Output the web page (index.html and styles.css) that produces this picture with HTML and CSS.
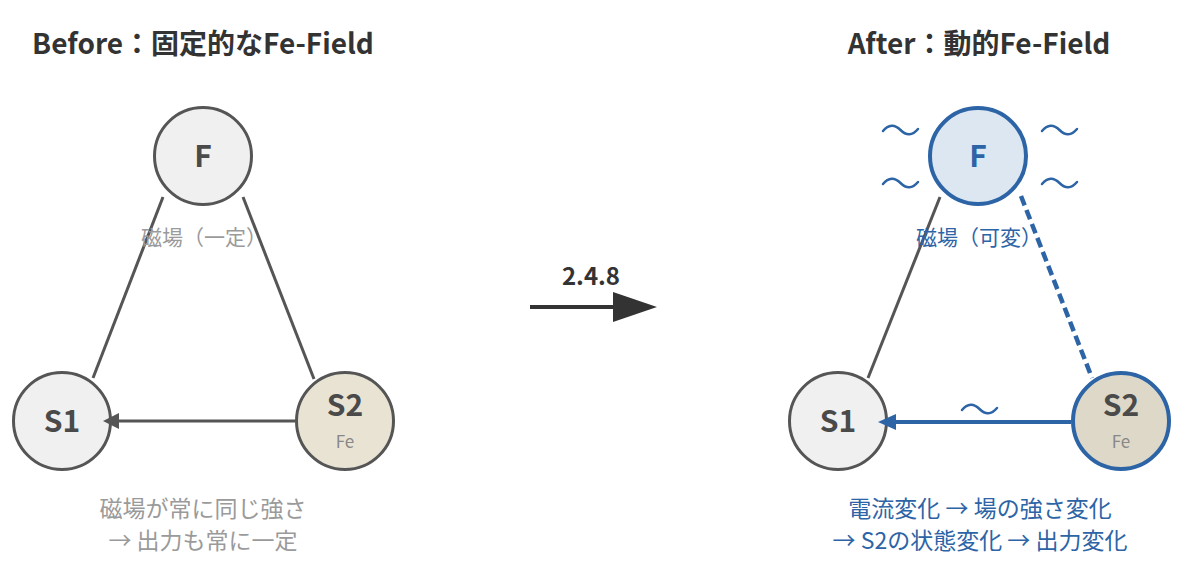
FILE: index.html
```html
<!DOCTYPE html>
<html lang="ja">
<head>
<meta charset="utf-8">
<title>Fe-Field Before / After</title>
<link rel="stylesheet" href="styles.css">
</head>
<body>
<main class="stage">
  <section class="panel">
    <h2 class="title">Before：固定的なFe-Field</h2>
    <svg class="diagram" viewBox="0 62 406 517" width="406" height="517">
      <line class="edge" x1="163" y1="197" x2="93" y2="378"/>
      <line class="edge" x1="243" y1="197" x2="314" y2="379"/>
      <line class="edge" x1="295" y1="421" x2="116" y2="421"/>
      <circle class="node" cx="203" cy="156" r="48.5"/>
      <circle class="node" cx="62" cy="421" r="48.5"/>
      <circle class="node node-fe" cx="345" cy="421" r="48.5"/>
      <polygon class="head" points="103,421 119,413 119,429"/>
      <text class="name" x="203" y="167">F</text>
      <text class="name" x="62" y="432">S1</text>
      <text class="name" x="345" y="416">S2</text>
      <text class="sub" x="345" y="448">Fe</text>
      <text class="label" x="204" y="245">磁場（一定）</text>
      <text class="caption" x="203" y="517">磁場が常に同じ強さ</text>
      <text class="caption" x="203" y="549">→ 出力も常に一定</text>
    </svg>
  </section>
  <section class="panel">
    <svg class="diagram" viewBox="406 0 368 579" width="368" height="579">
      <text class="step" x="591" y="285">2.4.8</text>
      <line class="bigline" x1="530" y1="307" x2="616" y2="307"/>
      <polygon class="bighead" points="613,292 657,307 613,322"/>
    </svg>
  </section>
  <section class="panel">
    <h2 class="title">After：動的Fe-Field</h2>
    <svg class="diagram" viewBox="774 62 410 517" width="410" height="517">
      <line class="edge" x1="940" y1="197" x2="868" y2="378"/>
      <line class="edge-dash" x1="1021" y1="196" x2="1092" y2="378"/>
      <line class="edge-blue" x1="1071" y1="422" x2="892" y2="422"/>
      <circle class="node node-active" cx="978" cy="156" r="48"/>
      <circle class="node" cx="838" cy="421" r="48.5"/>
      <circle class="node node-fe-active" cx="1121" cy="421" r="48"/>
      <polygon class="head-blue" points="878,422 896,414 896,430"/>
      <path class="wave" d="M883 131 Q891.5 121 900.5 130 T918 129"/>
      <path class="wave" d="M883 184 Q891.5 174 900.5 183 T918 182"/>
      <path class="wave" d="M1042 131 Q1050.5 121 1059.5 130 T1077 129"/>
      <path class="wave" d="M1042 184 Q1050.5 174 1059.5 183 T1077 182"/>
      <path class="wave" d="M962 410 Q970.5 400 979.5 409 T997 408"/>
      <text class="name name-blue" x="978" y="167">F</text>
      <text class="name" x="838" y="432">S1</text>
      <text class="name" x="1121" y="416">S2</text>
      <text class="sub" x="1121" y="448">Fe</text>
      <text class="label label-blue" x="979" y="245">磁場（可変）</text>
      <text class="caption caption-blue" x="980" y="517">電流変化 → 場の強さ変化</text>
      <text class="caption caption-blue" x="980" y="549">→ S2の状態変化 → 出力変化</text>
    </svg>
  </section>
</main>
</body>
</html>
```

FILE: styles.css
```css
html, body {
  margin: 0;
  padding: 0;
  background: #ffffff;
}

body {
  font-family: "Noto Sans CJK JP", "Noto Sans", sans-serif;
}

.stage {
  display: grid;
  grid-template-columns: 406px 368px 410px;
  width: 1200px;
  height: 579px;
  overflow: hidden;
}

.panel {
  display: flex;
  flex-direction: column;
}

.title {
  margin: 0;
  padding-top: 22px;
  height: 40px;
  line-height: 40px;
  font-size: 28px;
  font-weight: 700;
  color: #333333;
  text-align: center;
  white-space: nowrap;
}

.diagram {
  display: block;
  overflow: visible;
}

.edge {
  stroke: #555555;
  stroke-width: 3;
}

.edge-dash {
  stroke: #2c64a6;
  stroke-width: 4.5;
  stroke-dasharray: 10 5;
}

.edge-blue {
  stroke: #2c64a6;
  stroke-width: 4;
}

.head {
  fill: #555555;
}

.head-blue {
  fill: #2c64a6;
}

.node {
  fill: #f0f0f0;
  stroke: #555555;
  stroke-width: 3;
}

.node-fe {
  fill: #e9e3d4;
}

.node-active {
  fill: #dce7f2;
  stroke: #2c64a6;
  stroke-width: 4;
}

.node-fe-active {
  fill: #ddd8c8;
  stroke: #2c64a6;
  stroke-width: 4;
}

.wave {
  fill: none;
  stroke: #2c64a6;
  stroke-width: 2.5;
  stroke-linecap: round;
}

.name {
  font-family: "Noto Sans CJK JP", "Noto Sans", sans-serif;
  font-size: 30px;
  font-weight: 700;
  fill: #4a4a4a;
  text-anchor: middle;
}

.name-blue {
  fill: #2c64a6;
}

.sub {
  font-family: "Noto Sans CJK JP", "Noto Sans", sans-serif;
  font-size: 17px;
  fill: #888888;
  text-anchor: middle;
}

.label {
  font-family: "Noto Sans CJK JP", sans-serif;
  font-size: 21px;
  fill: #9a9a9a;
  text-anchor: middle;
}

.label-blue {
  fill: #2c64a6;
}

.caption {
  font-family: "Noto Sans CJK JP", sans-serif;
  font-size: 23px;
  fill: #9a9a9a;
  text-anchor: middle;
}

.caption-blue {
  fill: #2c64a6;
}

.step {
  font-family: "Noto Sans CJK JP", "Noto Sans", sans-serif;
  font-size: 24px;
  font-weight: 700;
  fill: #333333;
  text-anchor: middle;
}

.bigline {
  stroke: #333333;
  stroke-width: 4;
}

.bighead {
  fill: #333333;
}
```
